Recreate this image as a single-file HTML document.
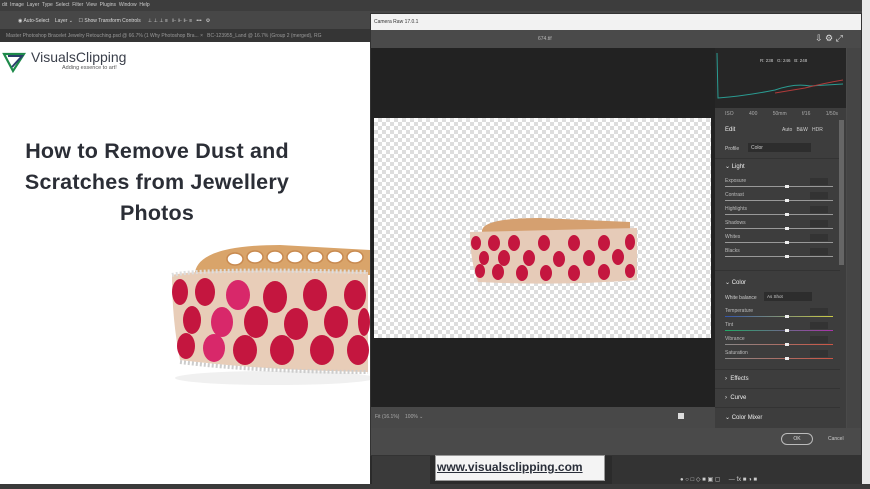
<!DOCTYPE html>
<html><head><meta charset="utf-8"><style>
*{margin:0;padding:0;box-sizing:border-box}
body{width:870px;height:489px;overflow:hidden;background:#2b2b2b;position:relative;font-family:"Liberation Sans",sans-serif}
.a{position:absolute}
.t{font-size:5px;color:#ddd;white-space:nowrap}
.check{background-color:#fff;background-image:linear-gradient(45deg,#ddd 25%,transparent 25%,transparent 75%,#ddd 75%),linear-gradient(45deg,#ddd 25%,transparent 25%,transparent 75%,#ddd 75%);background-size:8px 8px;background-position:0 0,4px 4px}
.lbl{position:absolute;left:10px;font-size:5px;color:#bbb}
.val{position:absolute;left:95px;width:18px;height:7px;background:#333}
.sl{position:absolute;left:10px;width:108px;height:1px;background:#999}
.knob{position:absolute;left:60px;width:4px;height:3px;background:#eee;top:-1px}
</style></head><body>
<div class="a" style="left:0;top:0;width:870px;height:11px;background:#3d3d3d"></div>
<div class="a t" style="left:2px;top:2px;color:#ccc">dit&nbsp; Image&nbsp; Layer&nbsp; Type&nbsp; Select&nbsp; Filter&nbsp; View&nbsp; Plugins&nbsp; Window&nbsp; Help</div>
<div class="a" style="left:0;top:11px;width:870px;height:18px;background:#474747"></div>
<div class="a t" style="left:18px;top:18px">◉ Auto-Select &nbsp;&nbsp; Layer ⌄ &nbsp;&nbsp; ☐ Show Transform Controls &nbsp;&nbsp;&nbsp; ⊥ ⊥ ⊥ ≡ &nbsp; ⊩ ⊩ ⊩ ≡ &nbsp; ••• &nbsp; ⚙</div>
<div class="a" style="left:0;top:29px;width:370px;height:13px;background:#353535"></div>
<div class="a t" style="left:6px;top:33px;color:#999">Master Photoshop Bracelet Jewelry Retouching.psd @ 66.7% (1 Why Photoshop Bra... × &nbsp; BC-123955_Land @ 16.7% (Group 2 (merged), RG</div>
<div class="a" style="left:0;top:42px;width:370px;height:442px;background:#fff"></div>
<div class="a" style="left:0;top:484px;width:870px;height:5px;background:#3a3a3a"></div>
<svg class="a" style="left:2px;top:50px" width="24" height="24" viewBox="0 0 24 24"><path d="M2 4 L22 4 L11 21 Z" fill="none" stroke="#1e8a4a" stroke-width="2.2"/><path d="M6 6 L20 6 L10 17" fill="none" stroke="#2a3f6a" stroke-width="2"/></svg>
<div class="a" style="left:31px;top:49px;font-size:14px;color:#3a3f4a">VisualsClipping</div>
<div class="a" style="left:62px;top:65px;font-size:5.5px;color:#555">Adding essence to art!</div>
<div class="a" style="left:0;top:136px;width:314px;text-align:center;font-weight:bold;font-size:21.5px;line-height:31px;color:#2b2e36;letter-spacing:0.2px">How to Remove Dust and<br>Scratches from Jewellery<br>Photos</div>
<svg class="a" style="left:160px;top:230px" width="210" height="160" viewBox="160 230 210 160">
<ellipse cx="275" cy="378" rx="100" ry="7" fill="#f0f0f0"/>
<path d="M195 272 Q200 245 280 245 L370 250 L370 275 L195 275Z" fill="#d9a46a"/>
<g fill="#fff" stroke="#c88a50" stroke-width="1.5"><ellipse cx="235" cy="259" rx="8" ry="6"/><ellipse cx="255" cy="257" rx="8" ry="6"/><ellipse cx="275" cy="257" rx="8" ry="6"/><ellipse cx="295" cy="257" rx="8" ry="6"/><ellipse cx="315" cy="257" rx="8" ry="6"/><ellipse cx="335" cy="257" rx="8" ry="6"/><ellipse cx="355" cy="257" rx="8" ry="6"/></g>
<path d="M172 275 Q200 268 368 272 L368 372 Q260 370 180 360 Q172 320 172 275Z" fill="#e8cdb8"/>
<path d="M172 275 Q200 268 368 272" fill="none" stroke="#ddd" stroke-width="4" stroke-dasharray="2 2"/>
<path d="M180 362 Q260 372 368 372" fill="none" stroke="#ccc" stroke-width="4" stroke-dasharray="2 2"/>
<g fill="#c4163f">
<ellipse cx="180" cy="292" rx="8" ry="13"/><ellipse cx="205" cy="292" rx="10" ry="14"/><ellipse cx="238" cy="295" rx="12" ry="15" fill="#d8286a"/><ellipse cx="275" cy="297" rx="12" ry="16"/><ellipse cx="315" cy="295" rx="12" ry="16"/><ellipse cx="355" cy="295" rx="11" ry="15"/>
<ellipse cx="192" cy="320" rx="9" ry="14"/><ellipse cx="222" cy="322" rx="11" ry="15" fill="#d8286a"/><ellipse cx="256" cy="322" rx="12" ry="16"/><ellipse cx="296" cy="324" rx="12" ry="16"/><ellipse cx="336" cy="322" rx="12" ry="16"/><ellipse cx="364" cy="322" rx="6" ry="14"/>
<ellipse cx="186" cy="346" rx="9" ry="13"/><ellipse cx="214" cy="348" rx="11" ry="14" fill="#d8286a"/><ellipse cx="245" cy="350" rx="12" ry="15"/><ellipse cx="282" cy="350" rx="12" ry="15"/><ellipse cx="322" cy="350" rx="12" ry="15"/><ellipse cx="358" cy="350" rx="11" ry="15"/>
</g></svg>
<div class="a" style="left:370px;top:13px;width:492px;height:443px;background:#4a4a4a;border:1px solid #333"></div>
<div class="a" style="left:371px;top:14px;width:490px;height:16px;background:#f2f2f2"></div>
<div class="a" style="left:374px;top:19px;font-size:5px;color:#333">Camera Raw 17.0.1</div>
<div class="a" style="left:538px;top:36px;font-size:5px;color:#bbb">674.tif</div>
<div class="a" style="left:815px;top:33px;font-size:9px;color:#ddd">⇩ ⚙ ⤢</div>
<div class="a" style="left:371px;top:48px;width:344px;height:359px;background:#222"></div>
<div class="a check" style="left:374px;top:118px;width:337px;height:220px"></div>
<svg class="a" style="left:468px;top:214px" width="172" height="78" viewBox="468 214 172 78">
<path d="M482 230 Q485 218 540 218 L630 222 L630 232 L482 234Z" fill="#d5a070"/>
<path d="M470 232 L637 228 L637 280 Q560 286 478 282 Q470 260 470 232Z" fill="#e6cbb8"/>
<g fill="#c4163f"><ellipse cx="476" cy="243" rx="5" ry="7"/><ellipse cx="494" cy="243" rx="6" ry="8"/><ellipse cx="514" cy="243" rx="6" ry="8"/><ellipse cx="544" cy="243" rx="6" ry="8"/><ellipse cx="574" cy="243" rx="6" ry="8"/><ellipse cx="604" cy="243" rx="6" ry="8"/><ellipse cx="630" cy="242" rx="5" ry="8"/>
<ellipse cx="484" cy="258" rx="5" ry="7"/><ellipse cx="504" cy="258" rx="6" ry="8"/><ellipse cx="529" cy="258" rx="6" ry="8"/><ellipse cx="559" cy="259" rx="6" ry="8"/><ellipse cx="589" cy="258" rx="6" ry="8"/><ellipse cx="618" cy="257" rx="6" ry="8"/>
<ellipse cx="480" cy="271" rx="5" ry="7"/><ellipse cx="498" cy="272" rx="6" ry="8"/><ellipse cx="522" cy="273" rx="6" ry="8"/><ellipse cx="546" cy="273" rx="6" ry="8"/><ellipse cx="574" cy="273" rx="6" ry="8"/><ellipse cx="604" cy="272" rx="6" ry="8"/><ellipse cx="630" cy="271" rx="5" ry="7"/></g></svg>
<div class="a" style="left:371px;top:407px;width:344px;height:21px;background:#484848"></div>
<div class="a t" style="left:375px;top:414px;color:#aaa">Fit (16.1%) &nbsp;&nbsp; 100% ⌄</div>
<div class="a" style="left:678px;top:413px;width:6px;height:6px;background:#ddd"></div>
<div class="a" style="left:715px;top:48px;width:131px;height:60px;background:#262626"></div>
<svg class="a" style="left:715px;top:48px" width="131" height="60"><path d="M2 5 L3 50 Q30 48 60 42 Q80 35 95 38 L128 36" fill="none" stroke="#2a9c92" stroke-width="1"/><path d="M60 45 L90 40 Q110 35 128 32" fill="none" stroke="#b03a3a" stroke-width="1"/><text x="45" y="14" font-size="4.5" fill="#ccc" font-family="Liberation Sans">R: 238 &nbsp; G: 246 &nbsp; B: 248</text></svg>
<div class="a" style="left:715px;top:108px;width:131px;height:320px;background:#3d3d3d"></div>
<div class="a t" style="left:725px;top:111px;color:#aaa;word-spacing:14px">ISO 400 50mm f/16 1/50s</div>
<div class="a t" style="left:725px;top:127px;font-size:6px;color:#eee">Edit</div>
<div class="a t" style="left:782px;top:127px;color:#ccc">Auto &nbsp; B&amp;W &nbsp; HDR</div>
<div class="a t" style="left:725px;top:146px;color:#ccc">Profile</div>
<div class="a" style="left:748px;top:143px;width:63px;height:9px;background:#2d2d2d;font-size:5px;color:#ccc;padding:2px 3px">Color</div>
<div class="a t" style="left:725px;top:163px;font-size:6px;color:#eee">⌄ Light</div>
<div class="a" style="left:715px;top:158px;width:125px;height:1px;background:#333"></div>
<div class="a" style="left:715px;top:270px;width:125px;height:1px;background:#333"></div>
<div class="a" style="left:715px;top:178px;width:125px;height:90px">
<div class="lbl" style="top:0">Exposure</div><div class="val" style="top:0"></div><div class="sl" style="top:8px"><div class="knob"></div></div>
<div class="lbl" style="top:14px">Contrast</div><div class="val" style="top:14px"></div><div class="sl" style="top:22px"><div class="knob"></div></div>
<div class="lbl" style="top:28px">Highlights</div><div class="val" style="top:28px"></div><div class="sl" style="top:36px"><div class="knob"></div></div>
<div class="lbl" style="top:42px">Shadows</div><div class="val" style="top:42px"></div><div class="sl" style="top:50px"><div class="knob"></div></div>
<div class="lbl" style="top:56px">Whites</div><div class="val" style="top:56px"></div><div class="sl" style="top:64px"><div class="knob"></div></div>
<div class="lbl" style="top:70px">Blacks</div><div class="val" style="top:70px"></div><div class="sl" style="top:78px"><div class="knob"></div></div>
</div>
<div class="a t" style="left:725px;top:279px;font-size:6px;color:#eee">⌄ Color</div>
<div class="a t" style="left:725px;top:295px;color:#ccc">White balance</div>
<div class="a" style="left:764px;top:292px;width:48px;height:9px;background:#2d2d2d;font-size:4.5px;color:#ccc;padding:2px 3px">As Shot</div>
<div class="a" style="left:715px;top:308px;width:125px;height:60px">
<div class="lbl" style="top:0">Temperature</div><div class="val" style="top:0"></div><div class="sl" style="top:8px;background:linear-gradient(90deg,#35a,#cc4)"><div class="knob"></div></div>
<div class="lbl" style="top:14px">Tint</div><div class="val" style="top:14px"></div><div class="sl" style="top:22px;background:linear-gradient(90deg,#2a6,#a3a)"><div class="knob"></div></div>
<div class="lbl" style="top:28px">Vibrance</div><div class="val" style="top:28px"></div><div class="sl" style="top:36px;background:linear-gradient(90deg,#888,#c54)"><div class="knob"></div></div>
<div class="lbl" style="top:42px">Saturation</div><div class="val" style="top:42px"></div><div class="sl" style="top:50px;background:linear-gradient(90deg,#888,#c54)"><div class="knob"></div></div>
</div>
<div class="a" style="left:715px;top:369px;width:125px;height:1px;background:#333"></div>
<div class="a t" style="left:725px;top:376px;font-size:6px;color:#eee">›&nbsp; Effects</div>
<div class="a" style="left:715px;top:388px;width:125px;height:1px;background:#333"></div>
<div class="a t" style="left:725px;top:395px;font-size:6px;color:#eee">›&nbsp; Curve</div>
<div class="a" style="left:715px;top:407px;width:125px;height:1px;background:#333"></div>
<div class="a t" style="left:725px;top:414px;font-size:6px;color:#eee">⌄ Color Mixer</div>
<div class="a" style="left:839px;top:120px;width:5px;height:145px;background:#666"></div>
<div class="a" style="left:847px;top:48px;width:14px;height:380px;background:#454545"></div>
<div class="a" style="left:781px;top:433px;width:32px;height:12px;border:1px solid #bbb;border-radius:7px;font-size:5px;color:#ddd;text-align:center;line-height:10px">OK</div>
<div class="a t" style="left:828px;top:436px;color:#ccc">Cancel</div>
<div class="a" style="left:862px;top:0;width:8px;height:484px;background:#e8e8e8"></div>
<div class="a" style="left:372px;top:456px;width:58px;height:28px;background:#3a3a3a"></div>
<div class="a" style="left:435px;top:455px;width:170px;height:26px;background:#f4f4f4;border:1px solid #999"></div>
<div class="a" style="left:437px;top:460px;font-size:12px;font-weight:bold;color:#2a2f3a;text-decoration:underline">www.visualsclipping.com</div>
<div class="a" style="left:612px;top:456px;width:250px;height:28px;background:#333"></div>
<div class="a t" style="left:680px;top:476px;color:#ccc;font-size:6px">● ○ □ ◇ ■ ▣ ▢ &nbsp;&nbsp;&nbsp; — fx ■ ◑ ■</div>
</body></html>
